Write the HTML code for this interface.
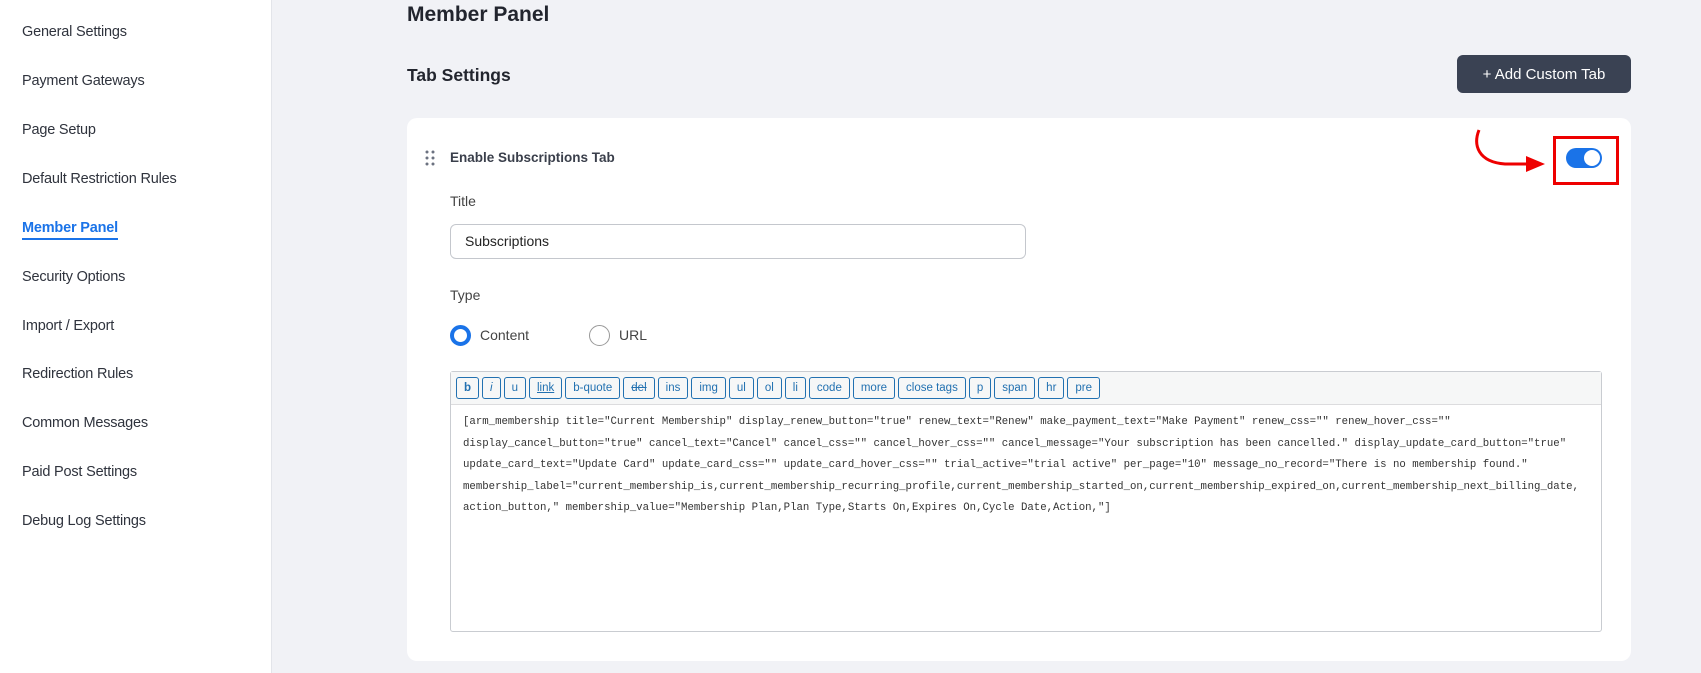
<!DOCTYPE html>
<html><head><style>
*{box-sizing:border-box;margin:0;padding:0}
body{width:1701px;height:673px;overflow:hidden;background:#f1f2f6;font-family:"Liberation Sans",sans-serif;position:relative;color:#2b2f3a}
.side{position:absolute;left:0;top:0;width:272px;height:673px;background:#fff;border-right:1px solid #e3e5ea}
.side div{position:absolute;left:22px;font-size:14.5px;color:#2f333d;letter-spacing:-0.2px}
.side .act{color:#1a73e8;font-weight:bold;border-bottom:2px solid #1a73e8;padding-bottom:2px}
.abs{position:absolute}
h1{position:absolute;left:407px;top:3px;font-size:21px;font-weight:bold;color:#22252e}
h2{position:absolute;left:407px;top:65px;font-size:17.5px;font-weight:bold;color:#22252e}
.btn{position:absolute;left:1457px;top:55px;width:174px;height:38px;background:#3a4253;border-radius:6px;color:#fff;font-size:15px;line-height:40px;text-align:center}
.card{position:absolute;left:407px;top:118px;width:1224px;height:543px;background:#fff;border-radius:10px}
.lbl{position:absolute;font-size:14px;color:#444}
.inp{position:absolute;left:450px;top:224px;width:576px;height:35px;border:1px solid #c4c7cd;border-radius:6px;font-size:14px;line-height:33px;padding-left:14px;color:#222}
.ed{position:absolute;left:450px;top:371px;width:1152px;height:261px;border:1px solid #c9ccd1;border-radius:3px;background:#fff}
.tb{height:33px;background:#f6f7f7;border-bottom:1px solid #dcdcde;padding:5px 0 0 5px;white-space:nowrap}
.tb span{display:inline-block;height:22px;line-height:20px;border:1px solid #2271b1;border-radius:3px;color:#2271b1;font-size:11.5px;padding:0 7px;margin-right:3px;background:#f6f7f7}
.code{font-family:"Liberation Mono",monospace;font-size:10.7px;line-height:21.5px;color:#333;padding:7px 0 0 12px;white-space:pre}
</style></head><body>
<div class="side">
<div style="top:24px">General Settings</div>
<div style="top:73px">Payment Gateways</div>
<div style="top:122px">Page Setup</div>
<div style="top:171px">Default Restriction Rules</div>
<div class="act" style="top:220px">Member Panel</div>
<div style="top:269px">Security Options</div>
<div style="top:318px">Import / Export</div>
<div style="top:366px">Redirection Rules</div>
<div style="top:415px">Common Messages</div>
<div style="top:464px">Paid Post Settings</div>
<div style="top:513px">Debug Log Settings</div>
</div>
<h1>Member Panel</h1>
<h2>Tab Settings</h2>
<div class="btn">+ Add Custom Tab</div>
<div class="card"></div>
<svg class="abs" style="left:424px;top:150px" width="12" height="16"><g fill="#6b7280"><circle cx="3" cy="2" r="1.5"/><circle cx="9" cy="2" r="1.5"/><circle cx="3" cy="8" r="1.5"/><circle cx="9" cy="8" r="1.5"/><circle cx="3" cy="14" r="1.5"/><circle cx="9" cy="14" r="1.5"/></g></svg>
<div class="abs" style="left:450px;top:150px;font-size:13.5px;font-weight:bold;color:#3a3f4b">Enable Subscriptions Tab</div>
<svg class="abs" style="left:1470px;top:125px" width="90" height="50"><path d="M9 5 C3 20 8 37 35 39 L60 39" fill="none" stroke="#e00" stroke-width="3"/><path d="M56 31 L75 39 L56 47 Z" fill="#e00"/></svg>
<div class="abs" style="left:1553px;top:136px;width:66px;height:49px;border:3px solid #e00"></div>
<div class="abs" style="left:1566px;top:148px;width:36px;height:20px;background:#1a73e8;border-radius:10px"><div style="position:absolute;right:2px;top:2px;width:16px;height:16px;border-radius:50%;background:#fff"></div></div>
<div class="lbl" style="left:450px;top:193px">Title</div>
<div class="inp">Subscriptions</div>
<div class="lbl" style="left:450px;top:287px">Type</div>
<div class="abs" style="left:450px;top:325px;width:21px;height:21px;border:4px solid #1a73e8;border-radius:50%"></div>
<div class="lbl" style="left:480px;top:327px">Content</div>
<div class="abs" style="left:589px;top:325px;width:21px;height:21px;border:1px solid #999;border-radius:50%"></div>
<div class="lbl" style="left:619px;top:327px">URL</div>
<div class="ed">
<div class="tb"><span><b>b</b></span><span><i>i</i></span><span>u</span><span><u>link</u></span><span>b-quote</span><span><s>del</s></span><span>ins</span><span>img</span><span>ul</span><span>ol</span><span>li</span><span>code</span><span>more</span><span>close tags</span><span>p</span><span>span</span><span>hr</span><span>pre</span></div>
<div class="code">[arm_membership title="Current Membership" display_renew_button="true" renew_text="Renew" make_payment_text="Make Payment" renew_css="" renew_hover_css=""
display_cancel_button="true" cancel_text="Cancel" cancel_css="" cancel_hover_css="" cancel_message="Your subscription has been cancelled." display_update_card_button="true"
update_card_text="Update Card" update_card_css="" update_card_hover_css="" trial_active="trial active" per_page="10" message_no_record="There is no membership found."
membership_label="current_membership_is,current_membership_recurring_profile,current_membership_started_on,current_membership_expired_on,current_membership_next_billing_date,
action_button," membership_value="Membership Plan,Plan Type,Starts On,Expires On,Cycle Date,Action,"]</div>
</div>
</body></html>
